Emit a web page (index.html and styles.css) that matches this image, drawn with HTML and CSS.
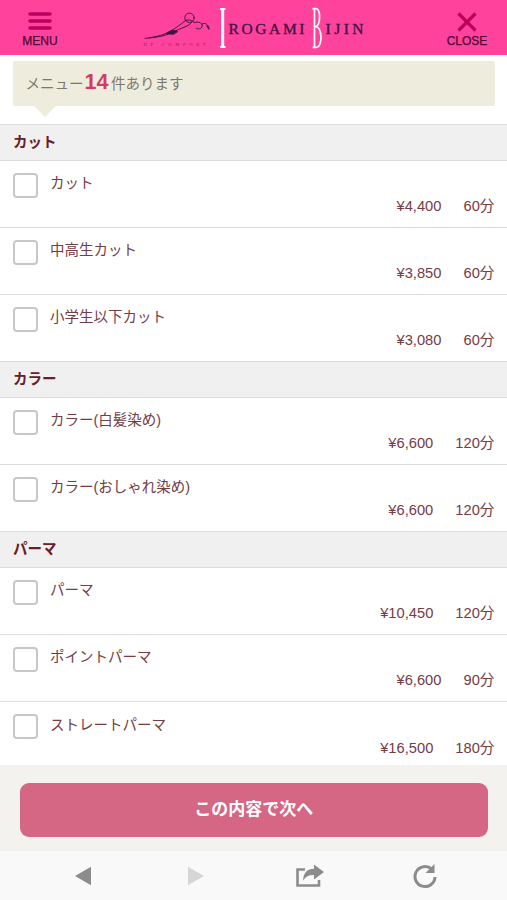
FILE: index.html
```html
<!DOCTYPE html>
<html lang="ja">
<head>
<meta charset="utf-8">
<title>Irogami Bijin</title>
<link rel="stylesheet" href="styles.css">
</head>
<body>
<div class="app">
  <header class="header">
    <button class="nav-btn nav-menu">
      <svg width="24" height="18" viewBox="0 0 24 18" stroke="#b8005c" stroke-width="3.6" stroke-linecap="round"><path d="M2 2h20M2 9h20M2 16h20"/></svg>
      <span>MENU</span>
    </button>
    <svg class="logo" width="230" height="54" viewBox="140 0 230 54">
      <g fill="none" stroke="#421347" stroke-linecap="round" stroke-linejoin="round">
        <path d="M146 38.500C155 37 162 36 168 33C174 30 180 26 187 20" stroke-width=".9"/>
        <path d="M150 38C161 37 168 35 174 32C182 28 189 27 193 22" stroke-width="1"/>
        <path d="M168 33.500l5-3 5 1-4 2.500z" fill="#421347" stroke-width="1.500"/>
        <circle cx="190.500" cy="17.800" r="4.700" stroke-width=".9"/>
        <path d="M186 21C188 19 193 20 195 22.500C201 21 204 24 203 27C201 30 198 29 197 28M203 24C207 22 209 25 210 28" stroke-width="1"/>
        <path d="M208 26l2 3" stroke-width="1.300"/>
      </g>
      <text x="144.500" y="45.500" class="logo-sub" textLength="62">HP COMFORT</text>
      <g stroke="#fff" fill="none">
        <path d="M223.700 9v38" stroke-width="3"/>
        <path d="M221 9h5.500M221 47h5.500" stroke-width="1.800"/>
      </g>
      <text x="229.500" y="34" class="logo-word" textLength="76">ROGAMI</text>
      <g stroke="#fff" fill="none" stroke-width="1.700">
        <path d="M313.500 8.700h3.500C322 8.700 321.500 25 317 26.500C323.500 28 323.500 47.300 317.500 47.300H313.500M315.500 9v38M315.500 26.500h2.500"/>
      </g>
      <text x="326.500" y="34" class="logo-word" textLength="38">IJIN</text>
    </svg>
    <button class="nav-btn nav-close">
      <svg width="20" height="20" viewBox="0 0 20 20" stroke="#b8005c" stroke-width="3.200" stroke-linecap="butt"><path d="M1.500 1.500l17 17M18.500 1.500l-17 17"/></svg>
      <span>CLOSE</span>
    </button>
  </header>

  <main class="content">
    <p class="notice">メニュー<strong>14</strong>件あります</p>

    <h2 class="group">カット</h2>
    <label class="item"><i class="box"></i><span class="name">カット</span><span class="meta"><span>¥4,400</span><span>60分</span></span></label>
    <label class="item"><i class="box"></i><span class="name">中高生カット</span><span class="meta"><span>¥3,850</span><span>60分</span></span></label>
    <label class="item"><i class="box"></i><span class="name">小学生以下カット</span><span class="meta"><span>¥3,080</span><span>60分</span></span></label>

    <h2 class="group">カラー</h2>
    <label class="item"><i class="box"></i><span class="name">カラー(白髪染め)</span><span class="meta"><span>¥6,600</span><span>120分</span></span></label>
    <label class="item"><i class="box"></i><span class="name">カラー(おしゃれ染め)</span><span class="meta"><span>¥6,600</span><span>120分</span></span></label>

    <h2 class="group">パーマ</h2>
    <label class="item"><i class="box"></i><span class="name">パーマ</span><span class="meta"><span>¥10,450</span><span>120分</span></span></label>
    <label class="item"><i class="box"></i><span class="name">ポイントパーマ</span><span class="meta"><span>¥6,600</span><span>90分</span></span></label>
    <label class="item"><i class="box"></i><span class="name">ストレートパーマ</span><span class="meta"><span>¥16,500</span><span>180分</span></span></label>
  </main>

  <div class="submit-bar"><button class="submit">この内容で次へ</button></div>

  <nav class="toolbar">
    <svg width="18" height="20" viewBox="0 0 18 20"><path d="M1 10L17 .8v18.400z" fill="#8c8c8c"/></svg>
    <svg width="18" height="20" viewBox="0 0 18 20"><path d="M16 10L0 .8v18.400z" fill="#d6d6d6"/></svg>
    <svg class="share" width="30" height="24" viewBox="0 0 30 24"><path d="M9 5.500H1.500V21.500H23v-5.500" fill="none" stroke="#8c8c8c" stroke-width="2.600"/><path d="M18 .5l10 7.500-10 7.500v-4.500C13 10.800 10 12.500 7 16.500C7.500 9 11 5 18 4.800z" fill="#8c8c8c"/></svg>
    <svg class="reload" width="26" height="26" viewBox="0 0 26 26"><path d="M19.800 6.200A10 10 0 1 0 23 14" fill="none" stroke="#8c8c8c" stroke-width="3"/><path d="M22.500 1v9h-9l4-4z" fill="#8c8c8c"/></svg>
  </nav>
</div>
</body>
</html>
```

FILE: styles.css
```css
* { box-sizing: border-box; }

body {
  margin: 0;
  background: #fff;
  color: #743c44;
  font-family: "Liberation Sans", "Noto Sans CJK JP", sans-serif;
  font-size: 14.5px;
}

button {
  border: 0;
  padding: 0;
  font: inherit;
}

.app {
  display: flex;
  flex-direction: column;
  height: 900px;
  overflow: hidden;
}

.header {
  flex: none;
  display: flex;
  align-items: flex-start;
  justify-content: space-between;
  height: 54.5px;
  padding: 0 15px;
  background: #ff429b;
}

.logo { flex: none; }

.logo-word {
  fill: #421347;
  font: 15.5px "Liberation Serif", serif;
  stroke: #421347;
  stroke-width: .35px;
}

.logo-sub {
  fill: #7d2866;
  font: 4.5px "Liberation Serif", serif;
}

.nav-btn {
  display: flex;
  flex-direction: column;
  align-items: center;
  width: 50px;
  background: none;
  color: #4d0b36;
  font-size: 12px;
  line-height: 14px;
  -webkit-text-stroke: .25px #4d0b36;
}

.nav-menu { padding-top: 12px; }
.nav-menu span { margin-top: 4px; }
.nav-close { padding-top: 12px; }
.nav-close span { margin-top: 2px; }

.content {
  flex: 1;
  min-height: 0;
  overflow: hidden;
}

.notice {
  position: relative;
  height: 45px;
  margin: 6.500px 12.500px 18px 13px;
  padding-left: 12.5px;
  border-radius: 2px;
  background: #eeecdc;
  color: #7d786c;
  font-size: 14.5px;
  line-height: 47px;
}

.notice::after {
  content: "";
  position: absolute;
  top: 100%;
  left: 21px;
  border: 11px solid transparent;
  border-top-color: #eeecdc;
  border-bottom: 0;
}

.notice strong {
  margin: 0 2.5px 0 1px;
  color: #d13c62;
  font-size: 21.5px;
  line-height: 1;
}

.group {
  height: 35.6px;
  margin: 0;
  padding-left: 13px;
  border-top: 1.5px solid #dcdcdc;
  background: #f0f0f0;
  color: #652029;
  font-size: 14.5px;
  line-height: 35px;
}

.item {
  display: grid;
  grid-template-columns: 25px 1fr;
  grid-template-rows: 23px 22px;
  column-gap: 12.5px;
  height: 67.2px;
  padding: 11.500px 12.5px 0 13px;
  border-top: 1.5px solid #dcdcdc;
}

.box {
  width: 25px;
  height: 25px;
  margin-top: .7px;
  border: 2px solid #c8c8c8;
  border-radius: 4px;
  background: #fff;
}

.name {
  margin-left: -.5px;
  line-height: 23.5px;
}

.meta {
  grid-column: 1 / -1;
  display: flex;
  justify-content: flex-end;
  gap: 22px;
  font-size: 14.7px;
  line-height: 22px;
}

.submit-bar {
  flex: none;
  height: 86px;
  padding: 17.500px 19.500px 0 20px;
  background: #f3f2ee;
}

.submit {
  display: block;
  width: 100%;
  height: 54px;
  padding-bottom: 5px;
  border-radius: 9px;
  background: #d56785;
  color: #fff;
  font-size: 17px;
  font-weight: bold;
}

.toolbar {
  flex: none;
  display: grid;
  grid-template-columns: repeat(4, 114px);
  justify-content: center;
  justify-items: center;
  align-items: center;
  height: 49px;
  background: #f9f9f9;
}
```
